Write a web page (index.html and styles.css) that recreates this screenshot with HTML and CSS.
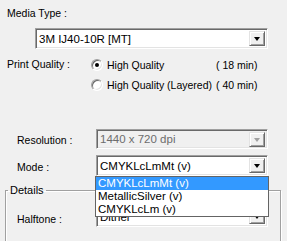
FILE: index.html
```html
<!DOCTYPE html>
<html lang="en">
<head>
    <meta charset="UTF-8">
    <title>Print Settings</title>
    <link rel="stylesheet" href="styles.css">
</head>
<body>

    <div class="panel">
        <div class="label media-label">Media Type :</div>
        <div class="combo media-combo">
            <span class="value">3M IJ40-10R [MT]</span>
            <span class="drop-btn"><i class="arrow"></i></span>
        </div>

        <div class="quality">
            <div class="label quality-label">Print Quality :</div>
            <div class="options">
                <div class="option">
                    <span class="radio checked"></span>
                    <span class="name">High Quality</span>
                    <span class="time">( 18 min)</span>
                </div>
                <div class="option">
                    <span class="radio"></span>
                    <span class="name">High Quality (Layered)</span>
                    <span class="time">( 40 min)</span>
                </div>
            </div>
        </div>

        <div class="field resolution">
            <div class="label">Resolution :</div>
            <div class="combo disabled">
                <span class="value">1440 x 720 dpi</span>
                <span class="drop-btn"><i class="arrow"></i></span>
            </div>
        </div>

        <div class="field mode">
            <div class="label">Mode :</div>
            <div class="combo">
                <span class="value">CMYKLcLmMt (v)</span>
                <span class="drop-btn"><i class="arrow"></i></span>
                <ul class="drop-list">
                    <li class="selected">CMYKLcLmMt (v)</li>
                    <li>MetallicSilver (v)</li>
                    <li>CMYKLcLm (v)</li>
                </ul>
            </div>
        </div>

        <fieldset class="details">
            <legend>Details</legend>
            <div class="field halftone">
                <div class="label">Halftone :</div>
                <div class="combo">
                    <span class="value">Dither</span>
                    <span class="drop-btn"><i class="arrow"></i></span>
                </div>
            </div>
        </fieldset>
    </div>

</body>
</html>
```

FILE: styles.css
```css
body {
    margin: 0;
    font-family: 'Liberation Sans', Arial, sans-serif;
    font-size: 10.5px;
    color: #000;
    background-color: #f0f0f0;
}
.panel {
    width: 287px;
    height: 241px;
    overflow: hidden;
    padding-top: 7px;
    box-sizing: border-box;
}
.label {
    line-height: 13px;
    white-space: nowrap;
}
.media-label {
    padding-left: 7px;
}
.combo {
    position: relative;
    height: 21px;
    box-sizing: border-box;
    background-color: #fff;
    border-top: 1px solid #a0a0a0;
    border-left: 1px solid #a0a0a0;
    border-right: 1px solid #fff;
    border-bottom: 1px solid #fff;
    box-shadow: inset 1px 1px 0 #696969, inset -1px -1px 0 #e3e3e3;
    display: flex;
    align-items: center;
    padding-left: 3px;
}
.combo .value {
    flex: 1;
    font-size: 11.5px;
    white-space: nowrap;
}
.media-combo {
    margin: 8px 19px 0 35px;
}
.drop-btn {
    width: 16px;
    height: 15px;
    margin-right: 2px;
    box-sizing: border-box;
    background-color: #f0f0f0;
    border-top: 1px solid #e3e3e3;
    border-left: 1px solid #e3e3e3;
    border-right: 1px solid #696969;
    border-bottom: 1px solid #696969;
    box-shadow: inset 1px 1px 0 #fff, inset -1px -1px 0 #a0a0a0;
    display: flex;
    align-items: center;
    justify-content: center;
}
.arrow {
    width: 0;
    height: 0;
    border-left: 3.5px solid transparent;
    border-right: 3.5px solid transparent;
    border-top: 4px solid #000;
    margin-top: 1px;
}
.quality {
    display: flex;
    margin-top: 9px;
    padding-left: 7px;
}
.quality-label {
    width: 84px;
}
.options {
    display: flex;
    flex-direction: column;
    gap: 7px;
}
.option {
    display: flex;
    align-items: center;
    height: 13px;
    white-space: nowrap;
}
.radio {
    width: 12px;
    height: 12px;
    flex: none;
    box-sizing: border-box;
    border-radius: 50%;
    background-color: #fff;
    border: 1px solid;
    border-color: #a0a0a0 #fff #fff #a0a0a0;
    box-shadow: inset 1px 1px 0 #696969, inset -1px -1px 0 #e3e3e3;
    display: flex;
    align-items: center;
    justify-content: center;
}
.radio.checked::after {
    content: "";
    width: 4px;
    height: 4px;
    border-radius: 50%;
    background-color: #000;
}
.name {
    flex: none;
    width: 113px;
    box-sizing: border-box;
    padding-left: 4px;
}
.field {
    display: flex;
    align-items: center;
    padding-left: 17px;
}
.field .label {
    width: 79px;
    padding-top: 3px;
}
.field .combo {
    flex: 1;
    margin-right: 19px;
}
.resolution {
    margin-top: 38px;
}
.resolution .combo {
    height: 20px;
}
.mode {
    margin-top: 6px;
}
.combo.disabled {
    background-color: #f0f0f0;
    color: #6d6d6d;
}
.combo.disabled .arrow {
    border-top-color: #a0a0a0;
}
.drop-list {
    position: absolute;
    left: -2px;
    right: -2px;
    top: 20px;
    margin: 0;
    padding: 0;
    list-style: none;
    background-color: #fff;
    border: 1px solid #646464;
    z-index: 2;
}
.drop-list li {
    height: 13px;
    line-height: 13px;
    padding-left: 2px;
    font-size: 11.5px;
}
.drop-list li.selected {
    background-color: #3399ff;
    color: #fff;
}
.details {
    margin: 8px 6px 0 5px;
    padding: 0 0 20px 0;
    border: 1px solid #a0a0a0;
    box-shadow: inset 1px 1px 0 #fff, 1px 1px 0 #fff;
}
.details legend {
    margin-left: 2px;
    padding: 0 2px;
    line-height: 13px;
    font-size: 11px;
}
.halftone {
    margin-top: 9px;
    padding-left: 11px;
}
.halftone .label {
    width: 79px;
    padding-top: 6px;
}
.halftone .combo {
    margin-right: 12px;
}
```
